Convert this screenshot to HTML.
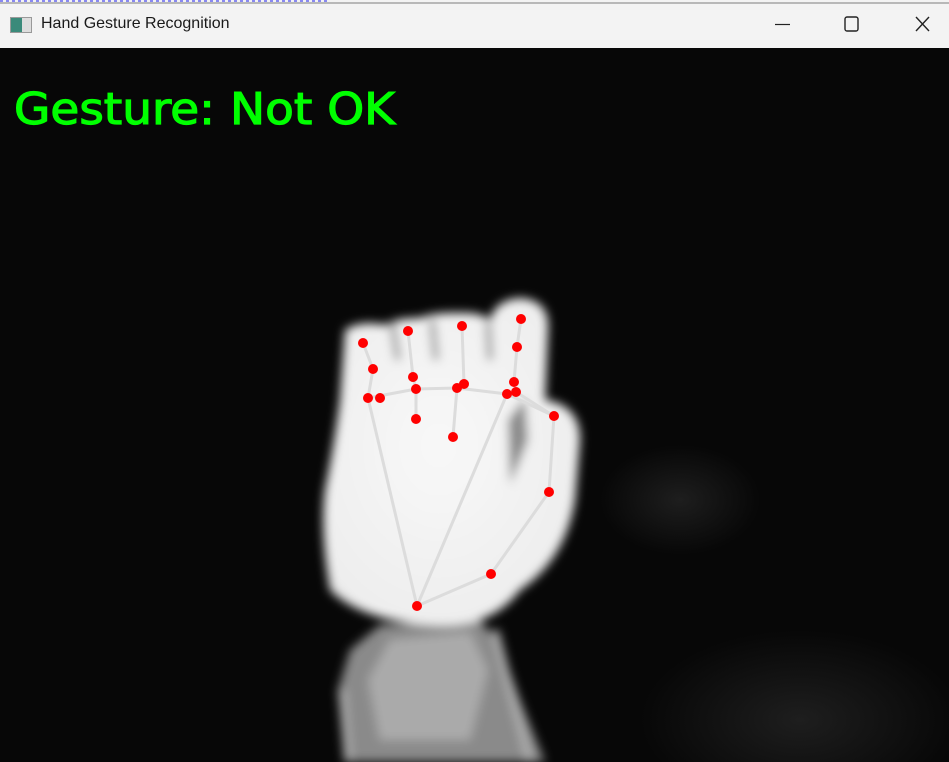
<!DOCTYPE html>
<html><head><meta charset="utf-8"><style>
html,body{margin:0;padding:0;width:949px;height:762px;overflow:hidden;background:#f3f3f3;font-family:"Liberation Sans",sans-serif}
#tb{position:absolute;left:0;top:0;width:949px;height:48px;background:#f3f3f3;overflow:hidden}
#topline{position:absolute;left:0;top:2px;width:949px;height:2px;background:#b8b8b8}
#blue{position:absolute;left:0;top:0;width:330px;height:3px;background:repeating-linear-gradient(90deg,#5a5af0 0 3px,transparent 3px 6px);opacity:.7}
#title{position:absolute;left:41px;top:14px;font-size:16px;line-height:20px;color:#1a1a1a}
#ico{position:absolute;left:10px;top:17px;width:20px;height:14px;border:1px solid #999;background:linear-gradient(90deg,#3a8a7a 0 55%,#ddd 55%)}
#img{position:absolute;left:0;top:48px;width:949px;height:714px;background:#000;overflow:hidden}
#img svg{position:absolute;left:0;top:0}
</style></head><body>
<div id="tb"><div id="blue"></div><div id="topline"></div><div id="ico"></div><div id="title">Hand Gesture Recognition</div>
<svg style="position:absolute;left:0;top:0" width="949" height="48">
<line x1="775" y1="24.5" x2="790" y2="24.5" stroke="#222" stroke-width="1.2"/>
<rect x="845" y="17" width="13" height="14" rx="2" fill="none" stroke="#222" stroke-width="1.4"/>
<path d="M916 17 L929 31 M929 17 L916 31" stroke="#222" stroke-width="1.4"/>
</svg></div>
<div id="img">
<svg width="949" height="714" viewBox="0 48 949 714">
<defs>
<filter id="b" x="-20%" y="-20%" width="140%" height="140%"><feGaussianBlur stdDeviation="5"/></filter>
<radialGradient id="hg" cx="0.45" cy="0.45" r="0.7"><stop offset="0" stop-color="#f8f8f8"/><stop offset="0.8" stop-color="#eeeeee"/><stop offset="1" stop-color="#d5d5d5"/></radialGradient>
<radialGradient id="sg"><stop offset="0" stop-color="#1e1e1e"/><stop offset="1" stop-color="#070707"/></radialGradient>
</defs>
<rect x="0" y="48" width="949" height="714" fill="#070707"/>
<ellipse cx="680" cy="500" rx="80" ry="55" fill="url(#sg)"/>
<ellipse cx="800" cy="720" rx="160" ry="90" fill="url(#sg)"/>
<g filter="url(#b)">
<path d="M345 762 L338 690 L350 650 L380 625 L480 620 L500 645 L520 700 L545 762 Z" fill="#8a8a8a"/>
<path d="M380 740 L368 680 L390 640 L470 632 L488 670 L470 740 Z" fill="#aaaaaa"/>
<path d="M342 690 L348 762 M495 630 L530 762" stroke="#b0b0b0" stroke-width="7" fill="none"/>
<path d="M345 330 Q360 320 385 325 Q395 318 420 318 Q435 312 460 313 Q480 312 490 320 Q495 300 520 298 Q550 300 548 330 L545 400 Q580 405 580 440 L575 500 Q565 560 520 590 Q490 630 430 625 Q360 620 330 590 Q320 530 325 490 Q335 440 340 400 Z" fill="url(#hg)"/>
<path d="M392 322 L398 360 M432 320 L436 360 M488 322 L490 360" stroke="#777" stroke-width="5" fill="none"/>
<path d="M508 420 L525 398 L528 440 L510 485 Z" fill="#8a8a8a"/>
</g>
<g stroke="#dcdcdc" stroke-width="3" fill="none">
<polyline points="417,606 491,574 549,492 554,416 516,392 514,382 517,347 521,319"/>
<line x1="417" y1="606" x2="368" y2="398"/>
<line x1="417" y1="606" x2="507" y2="394"/>
<polyline points="368,398 416,389 457,388 507,394 554,416"/>
<polyline points="368,398 373,369 363,343"/>
<polyline points="416,419 416,389 413,377 408,331"/>
<polyline points="453,437 457,388 464,384 462,326"/>
</g>
<g fill="#ff0000">
<circle cx="363" cy="343" r="5"/><circle cx="373" cy="369" r="5"/><circle cx="368" cy="398" r="5"/><circle cx="380" cy="398" r="5"/>
<circle cx="408" cy="331" r="5"/><circle cx="413" cy="377" r="5"/><circle cx="416" cy="389" r="5"/><circle cx="416" cy="419" r="5"/>
<circle cx="462" cy="326" r="5"/><circle cx="464" cy="384" r="5"/><circle cx="457" cy="388" r="5"/><circle cx="453" cy="437" r="5"/>
<circle cx="521" cy="319" r="5"/><circle cx="517" cy="347" r="5"/><circle cx="514" cy="382" r="5"/><circle cx="507" cy="394" r="5"/><circle cx="516" cy="392" r="5"/>
<circle cx="554" cy="416" r="5"/><circle cx="549" cy="492" r="5"/><circle cx="491" cy="574" r="5"/><circle cx="417" cy="606" r="5"/>
</g>
<text x="14" y="124" font-family="DejaVu Sans, sans-serif" font-size="44" fill="#00ff00" stroke="#00ff00" stroke-width="1.2" textLength="381" lengthAdjust="spacingAndGlyphs">Gesture: Not OK</text>
</svg>
</div>
</body></html>
